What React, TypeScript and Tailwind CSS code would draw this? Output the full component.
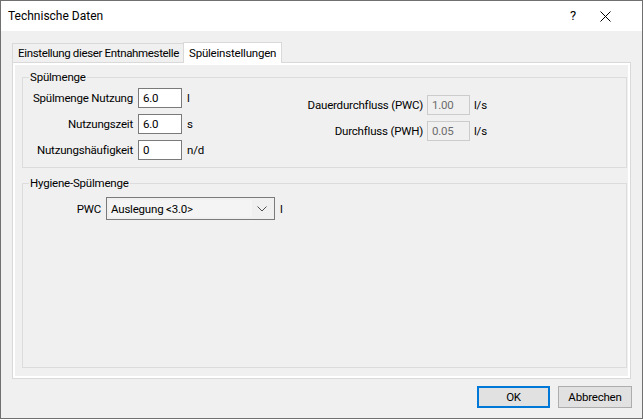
import React from "react";

const font = { fontFamily: 'Roboto, "Liberation Sans", sans-serif' };

function Field({ value, disabled }: { value: string; disabled?: boolean }) {
  return (
    <div
      className={`h-[20px] flex items-center pl-[4px] ${
        disabled
          ? "border border-[#cccccc] bg-[#f0f0f0] text-[#6d6d6d]"
          : "border border-[#7a7a7a] bg-white text-black"
      }`}
    >
      {value}
    </div>
  );
}

export default function App() {
  return (
    <div
      style={font}
      className="w-[643px] h-[419px] border border-[#707070] bg-[#f0f0f0] flex flex-col text-[11.5px] tracking-[-0.2px] leading-[16px] text-black whitespace-nowrap"
    >
      {/* Title bar */}
      <div className="h-[30px] bg-white flex items-center pl-[7px] text-[12px] tracking-normal">
        <span>Technische Daten</span>
        <div className="ml-auto flex items-center">
          <span className="w-[10px] text-center text-[13px]">?</span>
          <svg width="11" height="11" viewBox="0 0 11 11" className="ml-[22px] mr-[31px]">
            <path d="M0.5 0.5 L10.5 10.5 M10.5 0.5 L0.5 10.5" stroke="#000" strokeWidth="1" fill="none" />
          </svg>
        </div>
      </div>

      {/* Body */}
      <div className="flex-1 flex flex-col px-[11px] pt-[11px]">
        {/* Tabs */}
        <div className="flex items-end">
          <div className="h-[19px] w-[171px] border-t border-l border-[#d9d9d9] bg-[#f0f0f0] flex items-center pl-[5px] tracking-[-0.35px]">
            Einstellung dieser Entnahmestelle
          </div>
          <div className="relative z-10 -mb-px h-[21px] w-[99px] border-t border-l border-r border-[#d9d9d9] bg-white flex items-center pl-[5px]">
            Spüleinstellungen
          </div>
        </div>

        {/* Panel */}
        <div className="h-[317px] border border-[#d9d9d9] bg-white p-[2px]">
          <div className="h-full bg-[#f0f0f0] pl-[7px] pr-[1px] pt-[4px]">
            {/* Spülmenge */}
            <fieldset className="border border-[#dcdcdc] pb-[7px]">
              <legend className="ml-[6px] px-[1px]">Spülmenge</legend>
              <div className="flex pt-[3px]">
                <div className="grid grid-cols-[110px_44px_30px] gap-x-[5px] gap-y-[6px] items-center">
                  <span className="text-right">Spülmenge Nutzung</span>
                  <Field value="6.0" />
                  <span>l</span>
                  <span className="text-right">Nutzungszeit</span>
                  <Field value="6.0" />
                  <span>s</span>
                  <span className="text-right">Nutzungshäufigkeit</span>
                  <Field value="0" />
                  <span>n/d</span>
                </div>
                <div className="ml-[56px] mt-[7px] self-start grid grid-cols-[150px_43px_30px] gap-x-[4px] gap-y-[6px] items-center">
                  <span className="text-right">Dauerdurchfluss (PWC)</span>
                  <Field value="1.00" disabled />
                  <span>l/s</span>
                  <span className="text-right">Durchfluss (PWH)</span>
                  <Field value="0.05" disabled />
                  <span>l/s</span>
                </div>
              </div>
            </fieldset>

            {/* Hygiene-Spülmenge */}
            <fieldset className="mt-[7px] h-[193px] border border-[#dcdcdc]">
              <legend className="ml-[6px] px-[1px]">Hygiene-Spülmenge</legend>
              <div className="flex items-center pt-[6px]">
                <span className="w-[78px] text-right">PWC</span>
                <div className="ml-[5px] w-[169px] h-[23px] border border-[#7a7a7a] bg-[#f0f0f0] flex items-center p-[2px]">
                  <div className="flex-1 h-full bg-[#f4f4f4] flex items-center pl-[2px]">
                    Auslegung &lt;3.0&gt;
                  </div>
                  <svg width="20" height="10" viewBox="0 0 20 10" className="shrink-0">
                    <polyline points="5.5,2.5 10,7 14.5,2.5" stroke="#505050" strokeWidth="1" fill="none" />
                  </svg>
                </div>
                <span className="ml-[5px]">l</span>
              </div>
            </fieldset>
          </div>
        </div>

        {/* Buttons */}
        <div className="mt-[7px] -mr-px flex justify-end gap-[8px]">
          <button className="w-[73px] h-[22px] border-2 border-[#0078d7] bg-[#e1e1e1] flex items-center justify-center">
            OK
          </button>
          <button className="w-[74px] h-[22px] border border-[#adadad] bg-[#e1e1e1] flex items-center justify-center">
            Abbrechen
          </button>
        </div>
      </div>
    </div>
  );
}
